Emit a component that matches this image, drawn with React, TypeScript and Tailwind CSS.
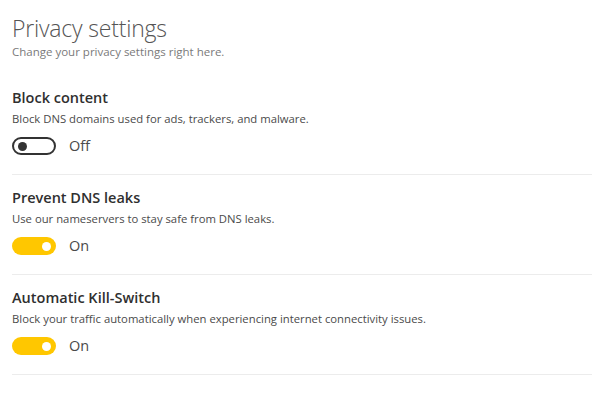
import React from "react";

function Toggle({ on }: { on: boolean }) {
  return on ? (
    <div className="flex h-[18px] w-[44px] items-center justify-end rounded-full bg-[#ffc700] pr-[5px]">
      <div className="h-[9px] w-[9px] rounded-full bg-white" />
    </div>
  ) : (
    <div className="flex h-[18px] w-[44px] items-center rounded-full border-2 border-[#333] pl-[4px]">
      <div className="h-[9px] w-[9px] rounded-full bg-[#333]" />
    </div>
  );
}

function Section({ title, desc, on }: { title: string; desc: string; on: boolean }) {
  return (
    <div className="border-b border-[#ececec] pt-[13px] pb-[18px]">
      <div className="text-[14.5px] leading-[20px] font-semibold text-[#2f2f2f]">{title}</div>
      <div className="mt-[3px] text-[11.3px] leading-[16px] text-[#4a4a4a]">{desc}</div>
      <div className="mt-[9px] flex items-center gap-[13px]">
        <Toggle on={on} />
        <span className="text-[14.5px] leading-[20px] text-[#4a4a4a]">{on ? "On" : "Off"}</span>
      </div>
    </div>
  );
}

export default function App() {
  return (
    <div
      className="h-[395px] w-[608px] bg-white pl-3 pr-4 pt-[12px]"
      style={{ fontFamily: '"Open Sans", "Noto Sans", sans-serif' }}
    >
      <div className="text-[23px] leading-[32px] font-light tracking-[-0.2px] text-[#555]">Privacy settings</div>
      <div className="text-[11.5px] leading-[16px] text-[#7a7a7a]">Change your privacy settings right here.</div>
      <div className="mt-[15px]">
        <Section title="Block content" desc="Block DNS domains used for ads, trackers, and malware." on={false} />
        <Section title="Prevent DNS leaks" desc="Use our nameservers to stay safe from DNS leaks." on={true} />
        <Section
          title="Automatic Kill-Switch"
          desc="Block your traffic automatically when experiencing internet connectivity issues."
          on={true}
        />
      </div>
    </div>
  );
}
